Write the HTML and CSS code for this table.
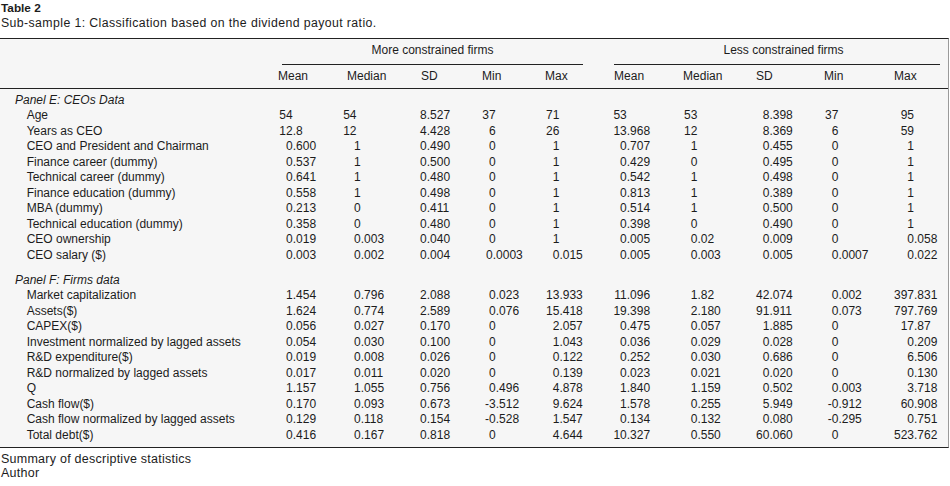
FILE: index.html
```html
<!DOCTYPE html>
<html>
<head>
<meta charset="utf-8">
<link rel="stylesheet" href="styles.css">
</head>
<body>
<div class="caption">
  <div class="title">Table 2</div>
  <div class="sub">Sub-sample 1: Classification based on the dividend payout ratio.</div>
</div>
<table class="stats">
  <colgroup>
    <col class="c-lab"><col class="c1"><col class="c2"><col class="c3"><col class="c4"><col class="c5"><col class="c-gap"><col class="c6"><col class="c7"><col class="c8"><col class="c9"><col class="c10">
  </colgroup>
  <thead>
    <tr class="groups">
      <th></th>
      <th colspan="5" class="grp"><div class="grp-rule">More constrained firms</div></th>
      <th></th>
      <th colspan="5" class="grp grp-r"><div class="grp-rule">Less constrained firms</div></th>
    </tr>
    <tr class="heads">
      <th></th><th>Mean</th><th>Median</th><th>SD</th><th>Min</th><th>Max</th><th></th><th>Mean</th><th>Median</th><th>SD</th><th>Min</th><th>Max</th>
    </tr>
  </thead>
  <tbody>
    <tr class="panel first"><td class="pan" colspan="12">Panel E: CEOs Data</td></tr>
    <tr><td class="lab">Age</td><td><span class="i">54</span></td><td><span class="i n4">54</span></td><td><span class="i">8</span>.527</td><td><span class="i">37</span></td><td><span class="i">71</span></td><td></td><td><span class="i">53</span></td><td><span class="i">53</span></td><td><span class="i">8</span>.398</td><td><span class="i">37</span></td><td><span class="i">95</span></td></tr>
    <tr><td class="lab">Years as CEO</td><td><span class="i">12</span>.8</td><td><span class="i n4">12</span></td><td><span class="i">4</span>.428</td><td><span class="i">6</span></td><td><span class="i">26</span></td><td></td><td><span class="i">13</span>.968</td><td><span class="i">12</span></td><td><span class="i">8</span>.369</td><td><span class="i">6</span></td><td><span class="i">59</span></td></tr>
    <tr><td class="lab">CEO and President and Chairman</td><td><span class="i">0</span>.600</td><td><span class="i">1</span></td><td><span class="i">0</span>.490</td><td><span class="i">0</span></td><td><span class="i">1</span></td><td></td><td><span class="i">0</span>.707</td><td><span class="i">1</span></td><td><span class="i">0</span>.455</td><td><span class="i">0</span></td><td><span class="i">1</span></td></tr>
    <tr><td class="lab">Finance career (dummy)</td><td><span class="i">0</span>.537</td><td><span class="i">1</span></td><td><span class="i">0</span>.500</td><td><span class="i">0</span></td><td><span class="i">1</span></td><td></td><td><span class="i">0</span>.429</td><td><span class="i">0</span></td><td><span class="i">0</span>.495</td><td><span class="i">0</span></td><td><span class="i">1</span></td></tr>
    <tr><td class="lab">Technical career (dummy)</td><td><span class="i">0</span>.641</td><td><span class="i">1</span></td><td><span class="i">0</span>.480</td><td><span class="i">0</span></td><td><span class="i">1</span></td><td></td><td><span class="i">0</span>.542</td><td><span class="i">1</span></td><td><span class="i">0</span>.498</td><td><span class="i">0</span></td><td><span class="i">1</span></td></tr>
    <tr><td class="lab">Finance education (dummy)</td><td><span class="i">0</span>.558</td><td><span class="i">1</span></td><td><span class="i">0</span>.498</td><td><span class="i">0</span></td><td><span class="i">1</span></td><td></td><td><span class="i">0</span>.813</td><td><span class="i">1</span></td><td><span class="i">0</span>.389</td><td><span class="i">0</span></td><td><span class="i">1</span></td></tr>
    <tr><td class="lab">MBA (dummy)</td><td><span class="i">0</span>.213</td><td><span class="i">0</span></td><td><span class="i">0</span>.411</td><td><span class="i">0</span></td><td><span class="i">1</span></td><td></td><td><span class="i">0</span>.514</td><td><span class="i">1</span></td><td><span class="i">0</span>.500</td><td><span class="i">0</span></td><td><span class="i">1</span></td></tr>
    <tr><td class="lab">Technical education (dummy)</td><td><span class="i">0</span>.358</td><td><span class="i">0</span></td><td><span class="i">0</span>.480</td><td><span class="i">0</span></td><td><span class="i">1</span></td><td></td><td><span class="i">0</span>.398</td><td><span class="i">0</span></td><td><span class="i">0</span>.490</td><td><span class="i">0</span></td><td><span class="i">1</span></td></tr>
    <tr><td class="lab">CEO ownership</td><td><span class="i">0</span>.019</td><td><span class="i">0</span>.003</td><td><span class="i">0</span>.040</td><td><span class="i">0</span></td><td><span class="i">1</span></td><td></td><td><span class="i">0</span>.005</td><td><span class="i">0</span>.02</td><td><span class="i">0</span>.009</td><td><span class="i">0</span></td><td><span class="i">0</span>.058</td></tr>
    <tr><td class="lab">CEO salary ($)</td><td><span class="i">0</span>.003</td><td><span class="i">0</span>.002</td><td><span class="i">0</span>.004</td><td><span class="i n3">0</span>.0003</td><td><span class="i">0</span>.015</td><td></td><td><span class="i">0</span>.005</td><td><span class="i">0</span>.003</td><td><span class="i">0</span>.005</td><td><span class="i">0</span>.0007</td><td><span class="i">0</span>.022</td></tr>
    <tr class="panel second"><td class="pan" colspan="12">Panel F: Firms data</td></tr>
    <tr><td class="lab">Market capitalization</td><td><span class="i">1</span>.454</td><td><span class="i">0</span>.796</td><td><span class="i">2</span>.088</td><td><span class="i">0</span>.023</td><td><span class="i">13</span>.933</td><td></td><td><span class="i">11</span>.096</td><td><span class="i">1</span>.82</td><td><span class="i">42</span>.074</td><td><span class="i">0</span>.002</td><td><span class="i">397</span>.831</td></tr>
    <tr><td class="lab">Assets($)</td><td><span class="i">1</span>.624</td><td><span class="i">0</span>.774</td><td><span class="i">2</span>.589</td><td><span class="i">0</span>.076</td><td><span class="i">15</span>.418</td><td></td><td><span class="i">19</span>.398</td><td><span class="i">2</span>.180</td><td><span class="i">91</span>.911</td><td><span class="i">0</span>.073</td><td><span class="i">797</span>.769</td></tr>
    <tr><td class="lab">CAPEX($)</td><td><span class="i">0</span>.056</td><td><span class="i">0</span>.027</td><td><span class="i">0</span>.170</td><td><span class="i">0</span></td><td><span class="i">2</span>.057</td><td></td><td><span class="i">0</span>.475</td><td><span class="i">0</span>.057</td><td><span class="i">1</span>.885</td><td><span class="i">0</span></td><td><span class="i">17</span>.87</td></tr>
    <tr><td class="lab">Investment normalized by lagged assets</td><td><span class="i">0</span>.054</td><td><span class="i">0</span>.030</td><td><span class="i">0</span>.100</td><td><span class="i">0</span></td><td><span class="i">1</span>.043</td><td></td><td><span class="i">0</span>.036</td><td><span class="i">0</span>.029</td><td><span class="i">0</span>.028</td><td><span class="i">0</span></td><td><span class="i">0</span>.209</td></tr>
    <tr><td class="lab">R&amp;D expenditure($)</td><td><span class="i">0</span>.019</td><td><span class="i">0</span>.008</td><td><span class="i">0</span>.026</td><td><span class="i">0</span></td><td><span class="i">0</span>.122</td><td></td><td><span class="i">0</span>.252</td><td><span class="i">0</span>.030</td><td><span class="i">0</span>.686</td><td><span class="i">0</span></td><td><span class="i">6</span>.506</td></tr>
    <tr><td class="lab">R&amp;D normalized by lagged assets</td><td><span class="i">0</span>.017</td><td><span class="i">0</span>.011</td><td><span class="i">0</span>.020</td><td><span class="i">0</span></td><td><span class="i">0</span>.139</td><td></td><td><span class="i">0</span>.023</td><td><span class="i">0</span>.021</td><td><span class="i">0</span>.020</td><td><span class="i">0</span></td><td><span class="i">0</span>.130</td></tr>
    <tr><td class="lab">Q</td><td><span class="i">1</span>.157</td><td><span class="i">1</span>.055</td><td><span class="i">0</span>.756</td><td><span class="i">0</span>.496</td><td><span class="i">4</span>.878</td><td></td><td><span class="i">1</span>.840</td><td><span class="i">1</span>.159</td><td><span class="i">0</span>.502</td><td><span class="i">0</span>.003</td><td><span class="i">3</span>.718</td></tr>
    <tr><td class="lab">Cash flow($)</td><td><span class="i">0</span>.170</td><td><span class="i">0</span>.093</td><td><span class="i">0</span>.673</td><td><span class="i">-3</span>.512</td><td><span class="i">9</span>.624</td><td></td><td><span class="i">1</span>.578</td><td><span class="i">0</span>.255</td><td><span class="i">5</span>.949</td><td><span class="i">-0</span>.912</td><td><span class="i">60</span>.908</td></tr>
    <tr><td class="lab">Cash flow normalized by lagged assets</td><td><span class="i">0</span>.129</td><td><span class="i">0</span>.118</td><td><span class="i">0</span>.154</td><td><span class="i">-0</span>.528</td><td><span class="i">1</span>.547</td><td></td><td><span class="i">0</span>.134</td><td><span class="i">0</span>.132</td><td><span class="i">0</span>.080</td><td><span class="i">-0</span>.295</td><td><span class="i">0</span>.751</td></tr>
    <tr class="last"><td class="lab">Total debt($)</td><td><span class="i">0</span>.416</td><td><span class="i">0</span>.167</td><td><span class="i">0</span>.818</td><td><span class="i">0</span></td><td><span class="i">4</span>.644</td><td></td><td><span class="i">10</span>.327</td><td><span class="i">0</span>.550</td><td><span class="i">60</span>.060</td><td><span class="i">0</span></td><td><span class="i">523</span>.762</td></tr>
  </tbody>
</table>
<div class="footer">
  <div>Summary of descriptive statistics</div>
  <div>Author</div>
</div>
</body>
</html>
```
FILE: styles.css
```css
body {
  margin: 0;
  background: #fff;
  color: #1c1c1c;
  font-family: "Liberation Sans", Arial, sans-serif;
  font-size: 12px;
}

.caption {
  padding: 1px 0 0 1px;
  line-height: 14.7px;
}
.caption .title {
  font-weight: bold;
  font-size: 11.8px;
}
.caption .sub {
  font-size: 12.3px;
  letter-spacing: 0.4px;
}

.stats {
  margin-top: 7.6px;
  width: 949px;
  table-layout: fixed;
  border-collapse: separate;
  border-spacing: 0;
  background: #f6f6f6;
  border-top: 1px solid #222;
  border-bottom: 1px solid #222;
  border-right: 1px solid #9a9a9a;
  line-height: 15.5px;
}

.c-lab { width: 278px; }
.c1 { width: 69px; }
.c2 { width: 74px; }
.c3 { width: 61px; }
.c4 { width: 63px; }
.c5 { width: 38px; }
.c-gap { width: 31px; }
.c6 { width: 69px; }
.c7 { width: 73px; }
.c8 { width: 68px; }
.c9 { width: 70px; }
.c10 { width: 54px; }

.stats th,
.stats td {
  padding: 0;
  font-weight: normal;
  text-align: left;
  white-space: nowrap;
  vertical-align: top;
}

.stats .groups th {
  padding-top: 3.5px;
  line-height: 15px;
}
.stats .groups .grp {
  text-align: center;
  padding-left: 4px;
}
.stats .groups .grp-r {
  padding-left: 13px;
}
.grp-rule {
  padding-bottom: 6.5px;
  border-bottom: 1px solid #222;
}
.stats .groups .grp-r .grp-rule {
  margin-right: 8px;
  margin-left: -13px;
  padding-left: 13px;
}

.stats .heads th {
  padding: 3.5px 0 4.5px;
  line-height: 15px;
  border-bottom: 1px solid #222;
}

.stats .panel .pan {
  padding-left: 15px;
  font-style: italic;
}
.stats .panel.first .pan { padding-top: 3.5px; }
.stats .panel.second .pan { padding-top: 9.5px; }

.stats .lab { padding-left: 26.7px; }

.stats .last td { padding-bottom: 4px; }

.i {
  display: inline-block;
  width: 40px;
  text-align: right;
}
td:nth-child(2) .i { margin-left: -25.3px; }
td:nth-child(3) .i { margin-left: -26.3px; }
td:nth-child(4) .i { margin-left: -34.3px; }
td:nth-child(5) .i { margin-left: -26.3px; }
td:nth-child(6) .i { margin-left: -25.6px; }
td:nth-child(8) .i { margin-left: -27.3px; }
td:nth-child(9) .i { margin-left: -25.6px; }
td:nth-child(10) .i { margin-left: -26.6px; }
td:nth-child(11) .i { margin-left: -25.6px; }
td:nth-child(12) .i { margin-left: -20px; }
td:nth-child(3) .i.n4 { margin-left: -30.5px; }
td:nth-child(5) .i.n3 { margin-left: -29.3px; }

.footer {
  margin-top: 3.8px;
  padding-left: 1px;
  font-size: 12.5px;
  line-height: 14px;
  letter-spacing: 0.25px;
}
```
